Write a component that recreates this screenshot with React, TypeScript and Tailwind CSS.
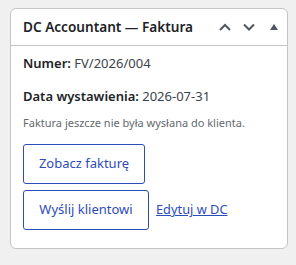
export default function App() {
  return (
    <div className="min-h-[265px] bg-[#f0f0f1] pt-2 pl-[10px] pr-2" style={{ fontFamily: '"Noto Sans", sans-serif' }}>
      <div className="w-[278px] rounded-md border border-[#c3c4c7] bg-white">
        <div className="flex h-[37px] items-center border-b border-[#c3c4c7] pl-3 pr-2">
          <h2 className="flex-1 text-[13.6px] font-semibold text-[#1d2327]">DC Accountant — Faktura</h2>
          <div className="flex items-center gap-[8px] text-[#50575e]">
            <svg width="16" height="16" viewBox="0 0 16 16" fill="none" stroke="currentColor" strokeWidth="2">
              <path d="M3 11l5-5 5 5" />
            </svg>
            <svg width="16" height="16" viewBox="0 0 16 16" fill="none" stroke="currentColor" strokeWidth="2">
              <path d="M3 5.5l5 5 5-5" />
            </svg>
            <svg width="10" height="10" viewBox="0 0 10 10" fill="currentColor" className="ml-1">
              <path d="M1 8h8L5 2z" />
            </svg>
          </div>
        </div>
        <div className="px-3 pb-[18px] pt-[8px] text-[13px] text-[#3c434a]">
          <p className="leading-[1.4]"><strong className="font-semibold text-[#1d2327]">Numer:</strong> FV/2026/004</p>
          <p className="mt-[15px] leading-[1.4]"><strong className="font-semibold text-[#1d2327]">Data wystawienia:</strong> 2026-07-31</p>
          <p className="mt-[10px] text-[11px] text-[#646970]">Faktura jeszcze nie była wysłana do klienta.</p>
          <button className="mt-[12px] flex h-[40px] w-[122px] items-center justify-center rounded-[3px] border border-[#2c4cb7] text-[13px] text-[#2c4cb7]">
            Zobacz fakturę
          </button>
          <div className="mt-[6px] flex items-center gap-[7px]">
            <button className="flex h-[40px] w-[126px] items-center justify-center rounded-[3px] border border-[#2c4cb7] text-[13px] text-[#2c4cb7]">
              Wyślij klientowi
            </button>
            <a href="#" className="text-[12.8px] text-[#2c4cb7] underline">Edytuj w DC</a>
          </div>
        </div>
      </div>
    </div>
  );
}
